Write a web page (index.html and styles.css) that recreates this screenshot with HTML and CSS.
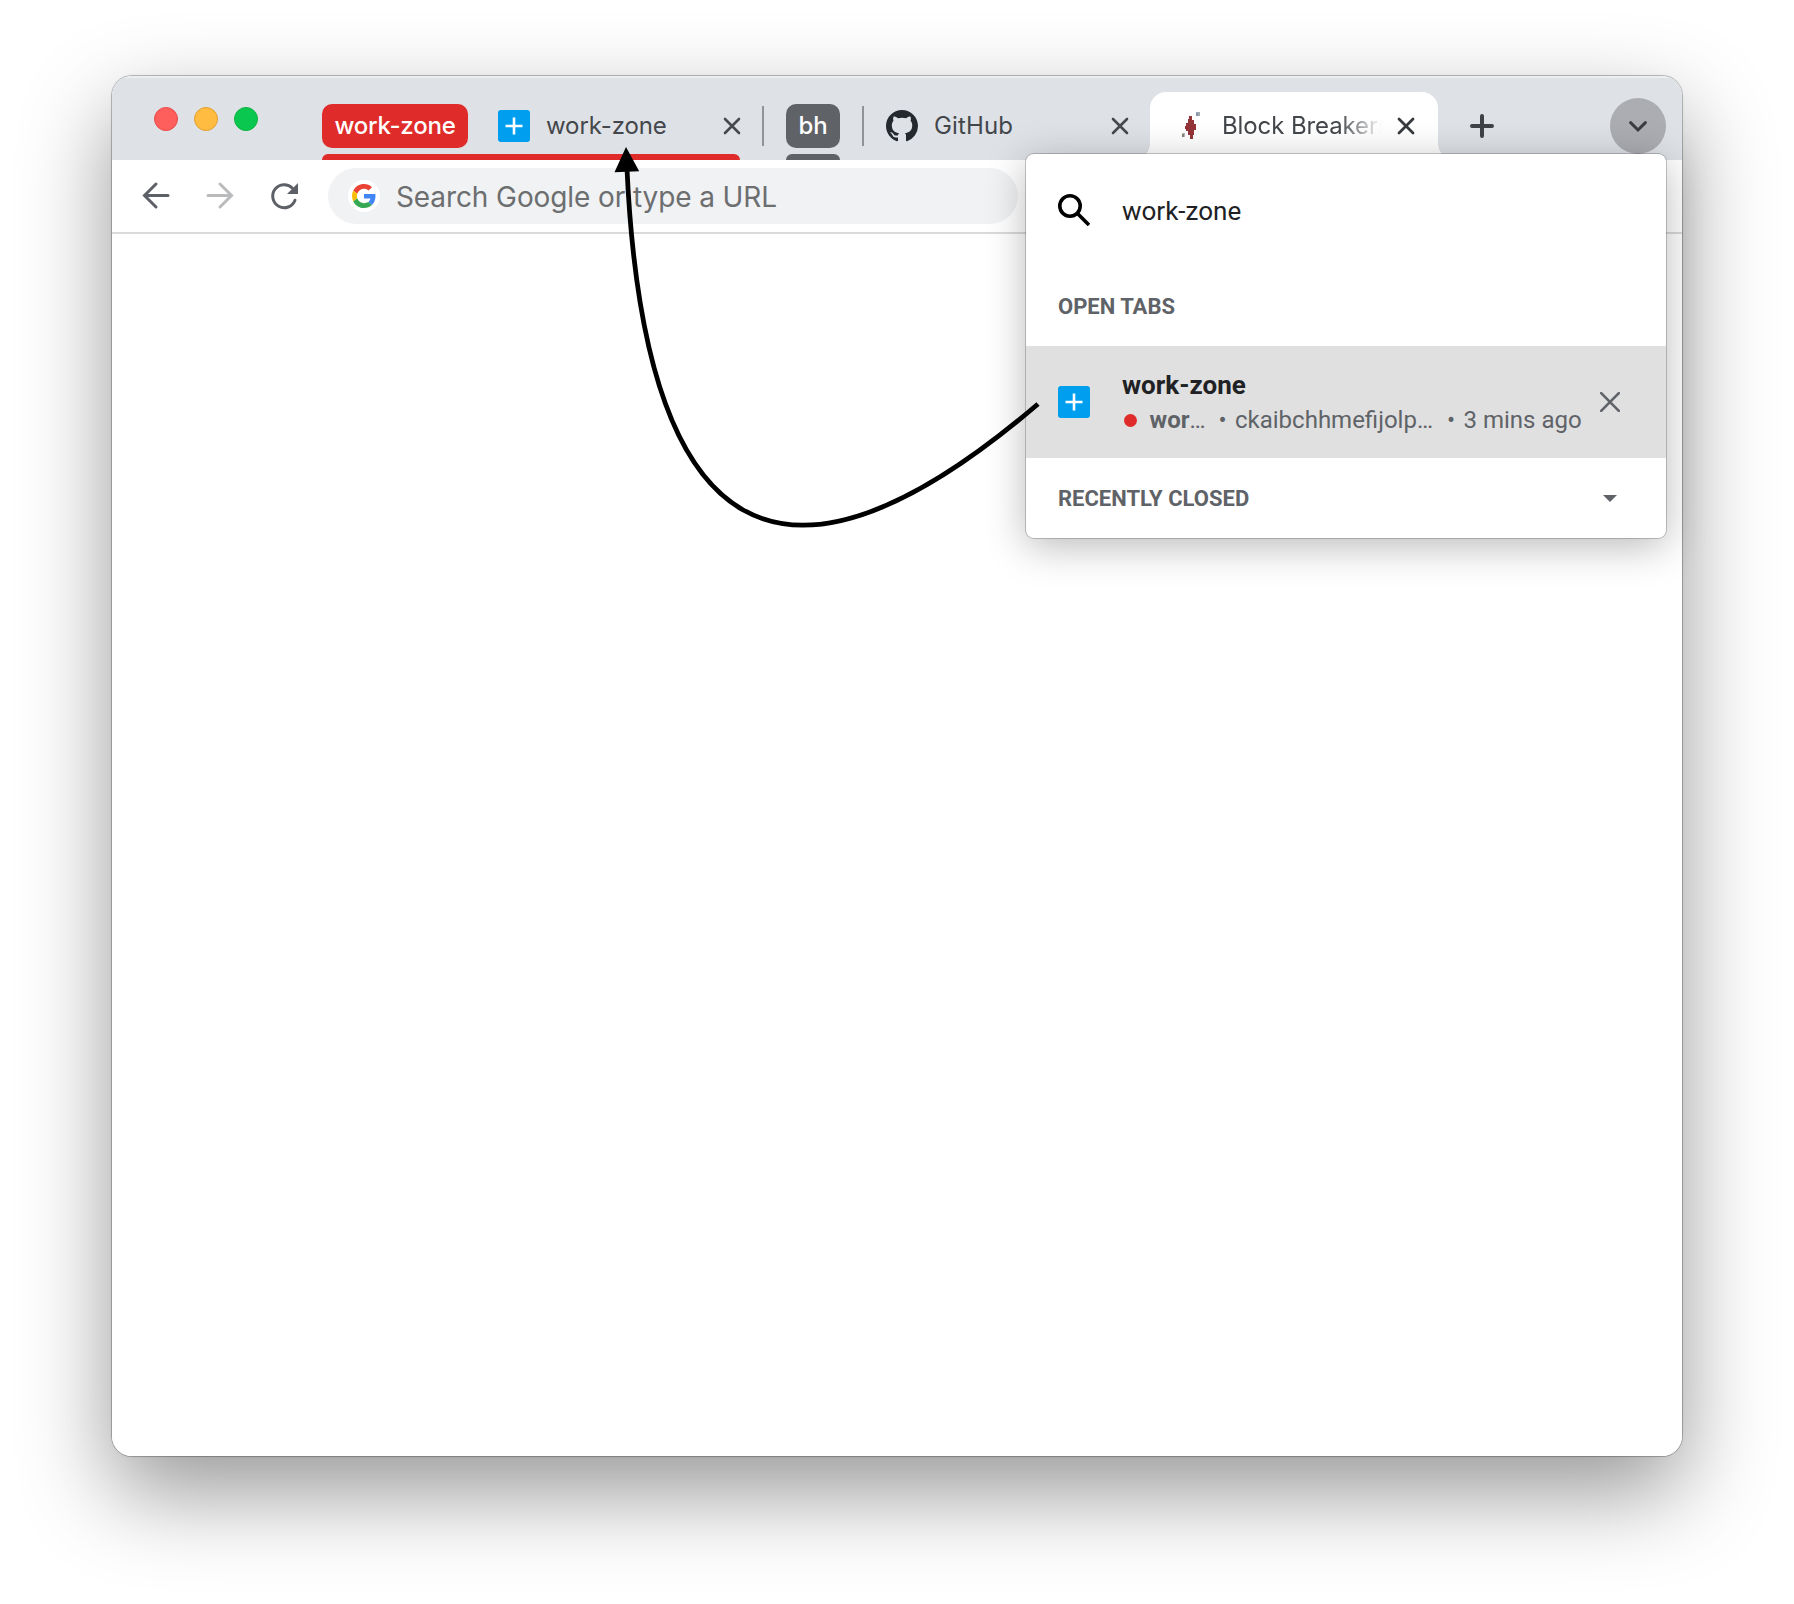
FILE: index.html
```html
<!DOCTYPE html>
<html lang="en">
<head>
<meta charset="utf-8">
<title>New Tab</title>
<link rel="stylesheet" href="styles.css">
</head>
<body>
<div class="window">
  <header class="strip">
    <div class="lights"><span class="light red"></span><span class="light amber"></span><span class="light green"></span></div>
    <div class="group group-work">
      <span class="chip chip-red">work-zone</span>
      <div class="tab tab-work">
        <svg class="fav" viewBox="0 0 32 32"><rect width="32" height="32" rx="3" fill="#009eee"/><path d="M16 7.500v17M7.500 16h17" stroke="#fff" stroke-width="2.600"/></svg>
        <span class="tab-title">work-zone</span>
        <svg class="close" viewBox="0 0 20 20"><path d="M3 3l14 14M17 3L3 17"/></svg>
      </div>
    </div>
    <span class="sep"></span>
    <div class="group group-bh"><span class="chip chip-gray">bh</span></div>
    <span class="sep sep-second"></span>
    <div class="tab tab-github">
      <svg class="fav" viewBox="0 0 16 16"><path fill="#24292f" d="M8 0C3.58 0 0 3.58 0 8c0 3.54 2.29 6.53 5.47 7.59.4.07.55-.17.55-.38 0-.19-.01-.82-.01-1.49-2.01.37-2.53-.49-2.69-.94-.09-.23-.48-.94-.82-1.13-.28-.15-.68-.52-.01-.53.63-.01 1.08.58 1.23.82.72 1.21 1.87.87 2.33.66.07-.52.28-.87.51-1.07-1.78-.2-3.64-.89-3.64-3.95 0-.87.31-1.59.82-2.15-.08-.2-.36-1.02.08-2.12 0 0 .67-.21 2.2.82.64-.18 1.32-.27 2-.27s1.36.09 2 .27c1.53-1.04 2.2-.82 2.2-.82.44 1.1.16 1.92.08 2.12.51.56.82 1.27.82 2.15 0 3.07-1.87 3.75-3.65 3.95.29.25.54.73.54 1.48 0 1.07-.01 1.93-.01 2.2 0 .21.15.46.55.38A8.01 8.01 0 0 0 16 8c0-4.42-3.58-8-8-8z"/></svg>
      <span class="tab-title loose">GitHub</span>
      <svg class="close" viewBox="0 0 20 20"><path d="M3 3l14 14M17 3L3 17"/></svg>
    </div>
    <div class="tab tab-active">
      <svg class="fav" viewBox="0 0 32 32"><path fill="#943538" d="M15 6h3v4h2v4h2v6h-2v5h-1v4h-3v-4h-2v-4h-2v-2h-1v-3h1v-3h2v-4h1z"/><path fill="#a3a9b1" d="M22 2h4v4h-4z"/><path fill="#8296ad" d="M22 3h2v3h-2z"/><path fill="#bcb9b4" d="M8 23h3v4H8z"/><path fill="#7f8878" d="M8 24h2v3H8z"/></svg>
      <span class="tab-title fade">Block Breakers</span>
      <svg class="close strong" viewBox="0 0 20 20"><path d="M3 3l14 14M17 3L3 17"/></svg>
    </div>
    <svg class="plus" viewBox="0 0 24 24"><path d="M12 2v20M2 12h20"/></svg>
    <span class="search-tabs"><svg viewBox="0 0 20 14"><path d="M2.600 3.600l7.400 7.400 7.400-7.400"/></svg></span>
  </header>
  <div class="toolbar">
    <svg class="nav" viewBox="0 0 32 32"><path d="M28 15.500H5M16 4L4.500 15.500 16 27"/></svg>
    <svg class="nav dim" viewBox="0 0 32 32"><path d="M4 15.500h23M16 4l11.500 11.500L16 27"/></svg>
    <svg class="nav" viewBox="0 0 32 32"><path d="M27 20.200A11.500 11.500 0 1 1 24.500 8.200"/><path class="solid" d="M30 3v11H19z"/></svg>
    <div class="omnibox">
      <span class="google"><svg viewBox="0 0 48 48"><path fill="#ea4335" d="M24 9.500c3.540 0 6.710 1.220 9.210 3.600l6.850-6.850C35.900 2.380 30.470 0 24 0 14.620 0 6.510 5.380 2.560 13.220l7.980 6.190C12.430 13.720 17.740 9.500 24 9.500z"/><path fill="#4285f4" d="M46.980 24.550c0-1.570-.15-3.090-.38-4.550H24v9.020h12.940c-.58 2.960-2.260 5.480-4.780 7.180l7.730 6c4.510-4.180 7.090-10.360 7.090-17.650z"/><path fill="#fbbc05" d="M10.530 28.590c-.48-1.450-.76-2.990-.76-4.590s.27-3.140.76-4.590l-7.980-6.190C.92 16.460 0 20.120 0 24s.92 7.540 2.560 10.780l7.970-6.190z"/><path fill="#34a853" d="M24 48c6.480 0 11.930-2.130 15.890-5.810l-7.730-6c-2.150 1.450-4.920 2.300-8.160 2.300-6.260 0-11.570-4.220-13.470-9.910l-7.980 6.190C6.510 42.620 14.620 48 24 48z"/></svg></span>
      <span class="hint">Search Google or type a URL</span>
    </div>
  </div>
  <main class="page"></main>
</div>

<section class="popup">
  <div class="query">
    <svg class="lens" viewBox="0 0 32 32"><circle cx="12" cy="12" r="10.200"/><path d="M20 20l11 11"/></svg>
    <span>work-zone</span>
  </div>
  <h2 class="heading">OPEN TABS</h2>
  <div class="result">
    <svg class="fav" viewBox="0 0 32 32"><rect width="32" height="32" rx="3" fill="#009eee"/><path d="M16 7.500v17M7.500 16h17" stroke="#fff" stroke-width="2.600"/></svg>
    <div class="info">
      <strong class="name">work-zone</strong>
      <div class="meta"><i class="dot"></i><span class="grp"><b>wor</b>…</span><span class="bullet">•</span><span class="host">ckaibchhmefijolp…</span><span class="bullet">•</span><span class="ago">3 mins ago</span></div>
    </div>
    <svg class="remove" viewBox="0 0 20 20"><path d="M1.200 1.200l17.600 17.600M18.800 1.200L1.200 18.800"/></svg>
  </div>
  <h2 class="heading closed">RECENTLY CLOSED <svg viewBox="0 0 14 7"><path d="M0 0h14L7 7z"/></svg></h2>
</section>

<svg class="arrow" viewBox="0 0 1794 1604"><path class="curve" d="M1038 404Q653 733 627 169"/><path d="M626 147l13.200 24.200-24.700 1z"/></svg>
</body>
</html>
```
FILE: styles.css
```css
* { box-sizing: border-box; }
body { margin: 0; background: #fff; width: 1794px; height: 1604px; overflow: hidden; padding: 76px 112px; position: relative; font-family: Inter, "Liberation Sans", sans-serif; }
svg { display: block; flex: none; }
.window { width: 1570px; height: 1380px; border-radius: 20px; overflow: hidden; background: #fff; display: flex; flex-direction: column; box-shadow: 0 0 0 1px rgba(0,0,0,.22), 0 0 3px rgba(0,0,0,.1), 0 36px 90px rgba(0,0,0,.41); }

.strip { height: 84px; flex: none; background: #dee1e6; padding-top: 16px; display: flex; align-items: center; box-shadow: inset 0 2px 1px rgba(255,255,255,.45); }
.lights { display: flex; gap: 16px; margin: -14px 64px 0 42px; }
.light { width: 24px; height: 24px; border-radius: 50%; border: 1px solid; }
.red { background: #ff5f5c; border-color: #e94b49; }
.amber { background: #ffbc40; border-color: #e2a02f; }
.green { background: #0ac84f; border-color: #0bb33f; }
.group { position: relative; height: 68px; display: flex; align-items: center; }
.group::after { content: ""; position: absolute; left: 0; right: 0; bottom: 0; height: 6px; border-radius: 6px 6px 0 0; background: #5f6368; }
.group-work { width: 418px; }
.group-work::after { background: #df2b2a; }
.chip { height: 44px; border-radius: 10px; display: flex; align-items: center; justify-content: center; color: #fff; font-size: 24px; font-weight: 500; line-height: 44px; letter-spacing: -.2px; }
.chip-red { width: 146px; background: #df2b2a; }
.chip-gray { width: 54px; background: #5f6368; }
.tab { height: 68px; display: flex; align-items: center; color: #43474b; font-size: 24px; }
.fav { width: 32px; height: 32px; }
.tab-title { margin-left: 16px; white-space: nowrap; flex: 1; line-height: 32px; letter-spacing: -.1px; }
.loose { letter-spacing: .15px; }
.tab-work { margin-left: 30px; width: 244px; margin-right: -2px; flex: none; }
.close { width: 20px; height: 20px; fill: none; stroke: #46494d; stroke-width: 2.6; stroke-linecap: round; }
.strong { stroke: #35383c; stroke-width: 2.8; }
.sep { width: 2px; height: 40px; background: #909398; margin: 0 22px; flex: none; }
.tab-github { width: 244px; margin-right: 20px; flex: none; }
.tab-active { position: relative; width: 288px; flex: none; padding: 0 22px 0 24px; background: #fff; border-radius: 16px 16px 0 0; }
.tab-active::before, .tab-active::after { content: ""; position: absolute; bottom: 0; width: 16px; height: 16px; }
.tab-active::before { left: -16px; background: radial-gradient(circle at 0 0, transparent 15.5px, #fff 16px); }
.tab-active::after { right: -16px; background: radial-gradient(circle at 100% 0, transparent 15.5px, #fff 16px); }
.fade { margin-right: 14px; overflow: hidden; -webkit-mask-image: linear-gradient(90deg, #000 73%, transparent 100%); mask-image: linear-gradient(90deg, #000 73%, transparent 100%); }
.plus { width: 24px; height: 24px; margin-left: 32px; fill: none; stroke: #3f4347; stroke-width: 4; stroke-linecap: round; }
.search-tabs { width: 56px; height: 56px; border-radius: 50%; background: #acadb2; margin-left: 116px; display: flex; align-items: center; justify-content: center; flex: none; }
.search-tabs svg { width: 20px; height: 14px; fill: none; stroke: #3a3c41; stroke-width: 3; stroke-linecap: round; }

.toolbar { height: 74px; flex: none; border-bottom: 2px solid #dadada; padding: 0 0 0 28px; display: flex; align-items: center; }
.nav { width: 32px; height: 32px; margin-right: 32px; fill: none; stroke: #5d6066; stroke-width: 3; stroke-linecap: round; }
.nav .solid { fill: #5d6066; stroke: none; }
.nav.dim { stroke: #babbbd; }
.omnibox { width: 690px; height: 56px; margin-left: -4px; border-radius: 28px; background: #f1f2f4; display: flex; align-items: center; padding-left: 20px; }
.google { width: 32px; height: 32px; border-radius: 50%; background: #fff; display: flex; align-items: center; justify-content: center; }
.google svg { width: 24px; height: 24px; }
.hint { margin-left: 16px; padding-top: 1px; font-size: 28px; line-height: 34px; letter-spacing: -.1px; color: #6c6e70; white-space: nowrap; }
.page { flex: 1; background: #fff; }

.popup { position: absolute; left: 1026px; top: 154px; width: 640px; height: 384px; border-radius: 8px; overflow: hidden; background: #fff; box-shadow: 0 0 0 1px rgba(0,0,0,.2), 0 8px 40px rgba(0,0,0,.28); font-family: Roboto, "Liberation Sans", sans-serif; display: flex; flex-direction: column; color: #202124; }
.query { height: 112px; padding-left: 32px; display: flex; align-items: center; gap: 32px; font-size: 26px; }
.query span { padding-top: 2px; }
.lens { width: 32px; height: 32px; fill: none; stroke: #000; stroke-width: 3.6; }
.heading { margin: 0; height: 80px; padding: 0 49px 0 32px; display: flex; align-items: center; justify-content: space-between; font-size: 22px; font-weight: 700; color: #5f6368; }
.heading svg { width: 14px; height: 7px; fill: #5f6368; }
.result { height: 112px; background: #e0e0e0; padding: 0 46px 0 32px; display: flex; align-items: center; }
.info { margin-left: 32px; flex: 1; white-space: nowrap; }
.name { display: block; font-size: 26px; line-height: 34px; }
.meta { display: flex; align-items: center; font-size: 24px; line-height: 34px; padding-top: 1px; margin-bottom: -1px; color: #5f6368; }
.dot { width: 13px; height: 13px; border-radius: 50%; background: #df2b2a; margin: 0 13px 0 1.500px; }
.grp { width: 69px; }
.bullet { width: 16.500px; font-size: 24px; }
.host { width: 212px; }
.remove { width: 20px; height: 20px; fill: none; stroke: #5f6368; stroke-width: 2.6; stroke-linecap: round; }

.arrow { position: absolute; left: 0; top: 0; width: 1794px; height: 1604px; pointer-events: none; }
.curve { fill: none; stroke: #000; stroke-width: 4.8; }
```
